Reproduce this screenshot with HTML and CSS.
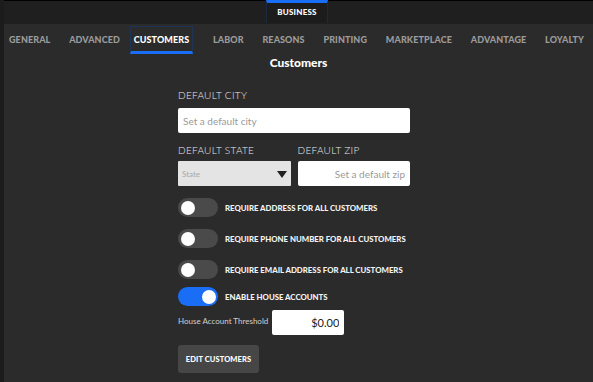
FILE: index.html
```html
<!DOCTYPE html>
<html lang="en">
<head>
    <meta charset="UTF-8">
    <meta name="viewport" content="width=device-width, initial-scale=1.0">
    <title>Customers</title>
    <link rel="stylesheet" href="styles.css">
</head>
<body>
<div class="app">
    <div class="topbar">
        <div class="top-tab">BUSINESS</div>
    </div>
    <div class="nav">
        <a class="nav-item">GENERAL</a>
        <a class="nav-item">ADVANCED</a>
        <a class="nav-item active">CUSTOMERS</a>
        <a class="nav-item">LABOR</a>
        <a class="nav-item">REASONS</a>
        <a class="nav-item">PRINTING</a>
        <a class="nav-item">MARKETPLACE</a>
        <a class="nav-item">ADVANTAGE</a>
        <a class="nav-item">LOYALTY</a>
    </div>
    <h1 class="title">Customers</h1>

    <div class="form">
        <label class="label">DEFAULT CITY</label>
        <input class="input" type="text" placeholder="Set a default city">

        <div class="pair">
            <div class="field">
                <label class="label">DEFAULT STATE</label>
                <div class="select">
                    <span>State</span>
                    <span class="arrow"></span>
                </div>
            </div>
            <div class="field">
                <label class="label">DEFAULT ZIP</label>
                <input class="input right" type="text" placeholder="Set a default zip">
            </div>
        </div>

        <div class="toggle-row">
            <span class="toggle"><span class="knob"></span></span>
            <span class="toggle-label">REQUIRE ADDRESS FOR ALL CUSTOMERS</span>
        </div>
        <div class="toggle-row">
            <span class="toggle"><span class="knob"></span></span>
            <span class="toggle-label">REQUIRE PHONE NUMBER FOR ALL CUSTOMERS</span>
        </div>
        <div class="toggle-row">
            <span class="toggle"><span class="knob"></span></span>
            <span class="toggle-label">REQUIRE EMAIL ADDRESS FOR ALL CUSTOMERS</span>
        </div>
        <div class="toggle-row on-row">
            <span class="toggle on"><span class="knob"></span></span>
            <span class="toggle-label">ENABLE HOUSE ACCOUNTS</span>
        </div>

        <div class="threshold">
            <span class="small-label">House Account Threshold</span>
            <input class="input money" type="text" value="$0.00">
        </div>

        <button class="btn">EDIT CUSTOMERS</button>
    </div>
</div>
</body>
</html>
```

FILE: styles.css
```css
* {
    box-sizing: border-box;
}

body {
    margin: 0;
    background-color: #2b2b2b;
    font-family: Lato, "Liberation Sans", sans-serif;
    color: #fff;
}

.app {
    height: 382px;
    border-left: 4px solid #1c1c1c;
    overflow: hidden;
}

.topbar {
    height: 24px;
    background-color: #1f1f1f;
    border-top: 1px solid #000;
    display: flex;
    justify-content: center;
    padding-right: 3px;
}

.top-tab {
    width: 62px;
    height: 23px;
    margin-top: -1px;
    border-top: 3px solid #1a6ef5;
    border-left: 1px solid #1b2a40;
    border-right: 1px solid #1b2a40;
    background-color: #1c1c1c;
    font-size: 8px;
    font-weight: 900;
    text-align: center;
    line-height: 18px;
    letter-spacing: 0.2px;
}

.nav {
    display: flex;
    justify-content: space-between;
    align-items: center;
    height: 32px;
    padding: 0 5px 0 1px;
}

.nav-item {
    font-size: 9px;
    font-weight: 900;
    color: #9b9b9b;
    padding: 7px 3px 6px;
    border: 1px solid transparent;
    border-bottom-width: 3px;
    letter-spacing: 0.1px;
}

.nav-item.active {
    color: #fff;
    border-color: #1e3556;
    border-bottom-color: #1a6ef5;
    margin: 0 5px 0 -5px;
}

.title {
    margin: 0;
    font-size: 12px;
    font-weight: 900;
    text-align: center;
    line-height: 14px;
}

.form {
    width: 232px;
    margin: 19px 0 0 174px;
    display: flex;
    flex-direction: column;
}

.label {
    font-size: 10px;
    font-weight: 300;
    color: #ececec;
    letter-spacing: 0.3px;
    line-height: 12px;
    margin-bottom: 7px;
}

.input {
    height: 25px;
    width: 100%;
    border: none;
    border-radius: 2px;
    background-color: #fff;
    font-family: Lato, "Liberation Sans", sans-serif;
    font-size: 10px;
    padding: 0 5px;
    color: #333;
    outline: none;
}

.input::placeholder {
    color: #9a9a9a;
}

.input.right {
    text-align: right;
}

.pair {
    display: flex;
    gap: 7px;
    margin-top: 11px;
}

.pair .label {
    margin-bottom: 5px;
}

.field {
    flex: 1;
    display: flex;
    flex-direction: column;
}

.select {
    height: 25px;
    background-color: #e4e4e4;
    border-radius: 1px;
    display: flex;
    align-items: center;
    justify-content: space-between;
    padding: 0 4px 0 4px;
    font-size: 8px;
    color: #a8a8a8;
}

.arrow {
    width: 0;
    height: 0;
    border-left: 5px solid transparent;
    border-right: 5px solid transparent;
    border-top: 7px solid #222;
    margin-top: 1px;
}

.toggle-row {
    display: flex;
    align-items: center;
    gap: 7px;
    margin-top: 12px;
    white-space: nowrap;
}

.toggle-row.on-row {
    margin-top: 8px;
}

.toggle {
    flex: none;
    width: 40px;
    height: 19px;
    border-radius: 10px;
    background-color: #4a4a4a;
    display: flex;
    align-items: center;
    padding: 0 3px;
}

.toggle.on {
    background-color: #1a6ef5;
    justify-content: flex-end;
    padding: 0 2px;
}

.knob {
    width: 14px;
    height: 14px;
    border-radius: 50%;
    background-color: #fff;
}

.toggle-label {
    font-size: 7.8px;
    font-weight: 900;
    color: #f2f2f2;
}

.threshold {
    display: flex;
    align-items: center;
    gap: 4px;
    margin-top: 4px;
}

.small-label {
    font-size: 8px;
    color: #d0d0d0;
    margin-top: -4px;
}

.input.money {
    width: 72px;
    text-align: right;
    font-size: 11px;
    color: #222;
}

.btn {
    align-self: flex-start;
    margin-top: 10px;
    width: 81px;
    height: 28px;
    border: none;
    border-radius: 3px;
    background-color: #464646;
    color: #fff;
    font-family: Lato, "Liberation Sans", sans-serif;
    font-size: 7.5px;
    font-weight: 900;
    letter-spacing: 0.1px;
    padding: 0;
}
```
